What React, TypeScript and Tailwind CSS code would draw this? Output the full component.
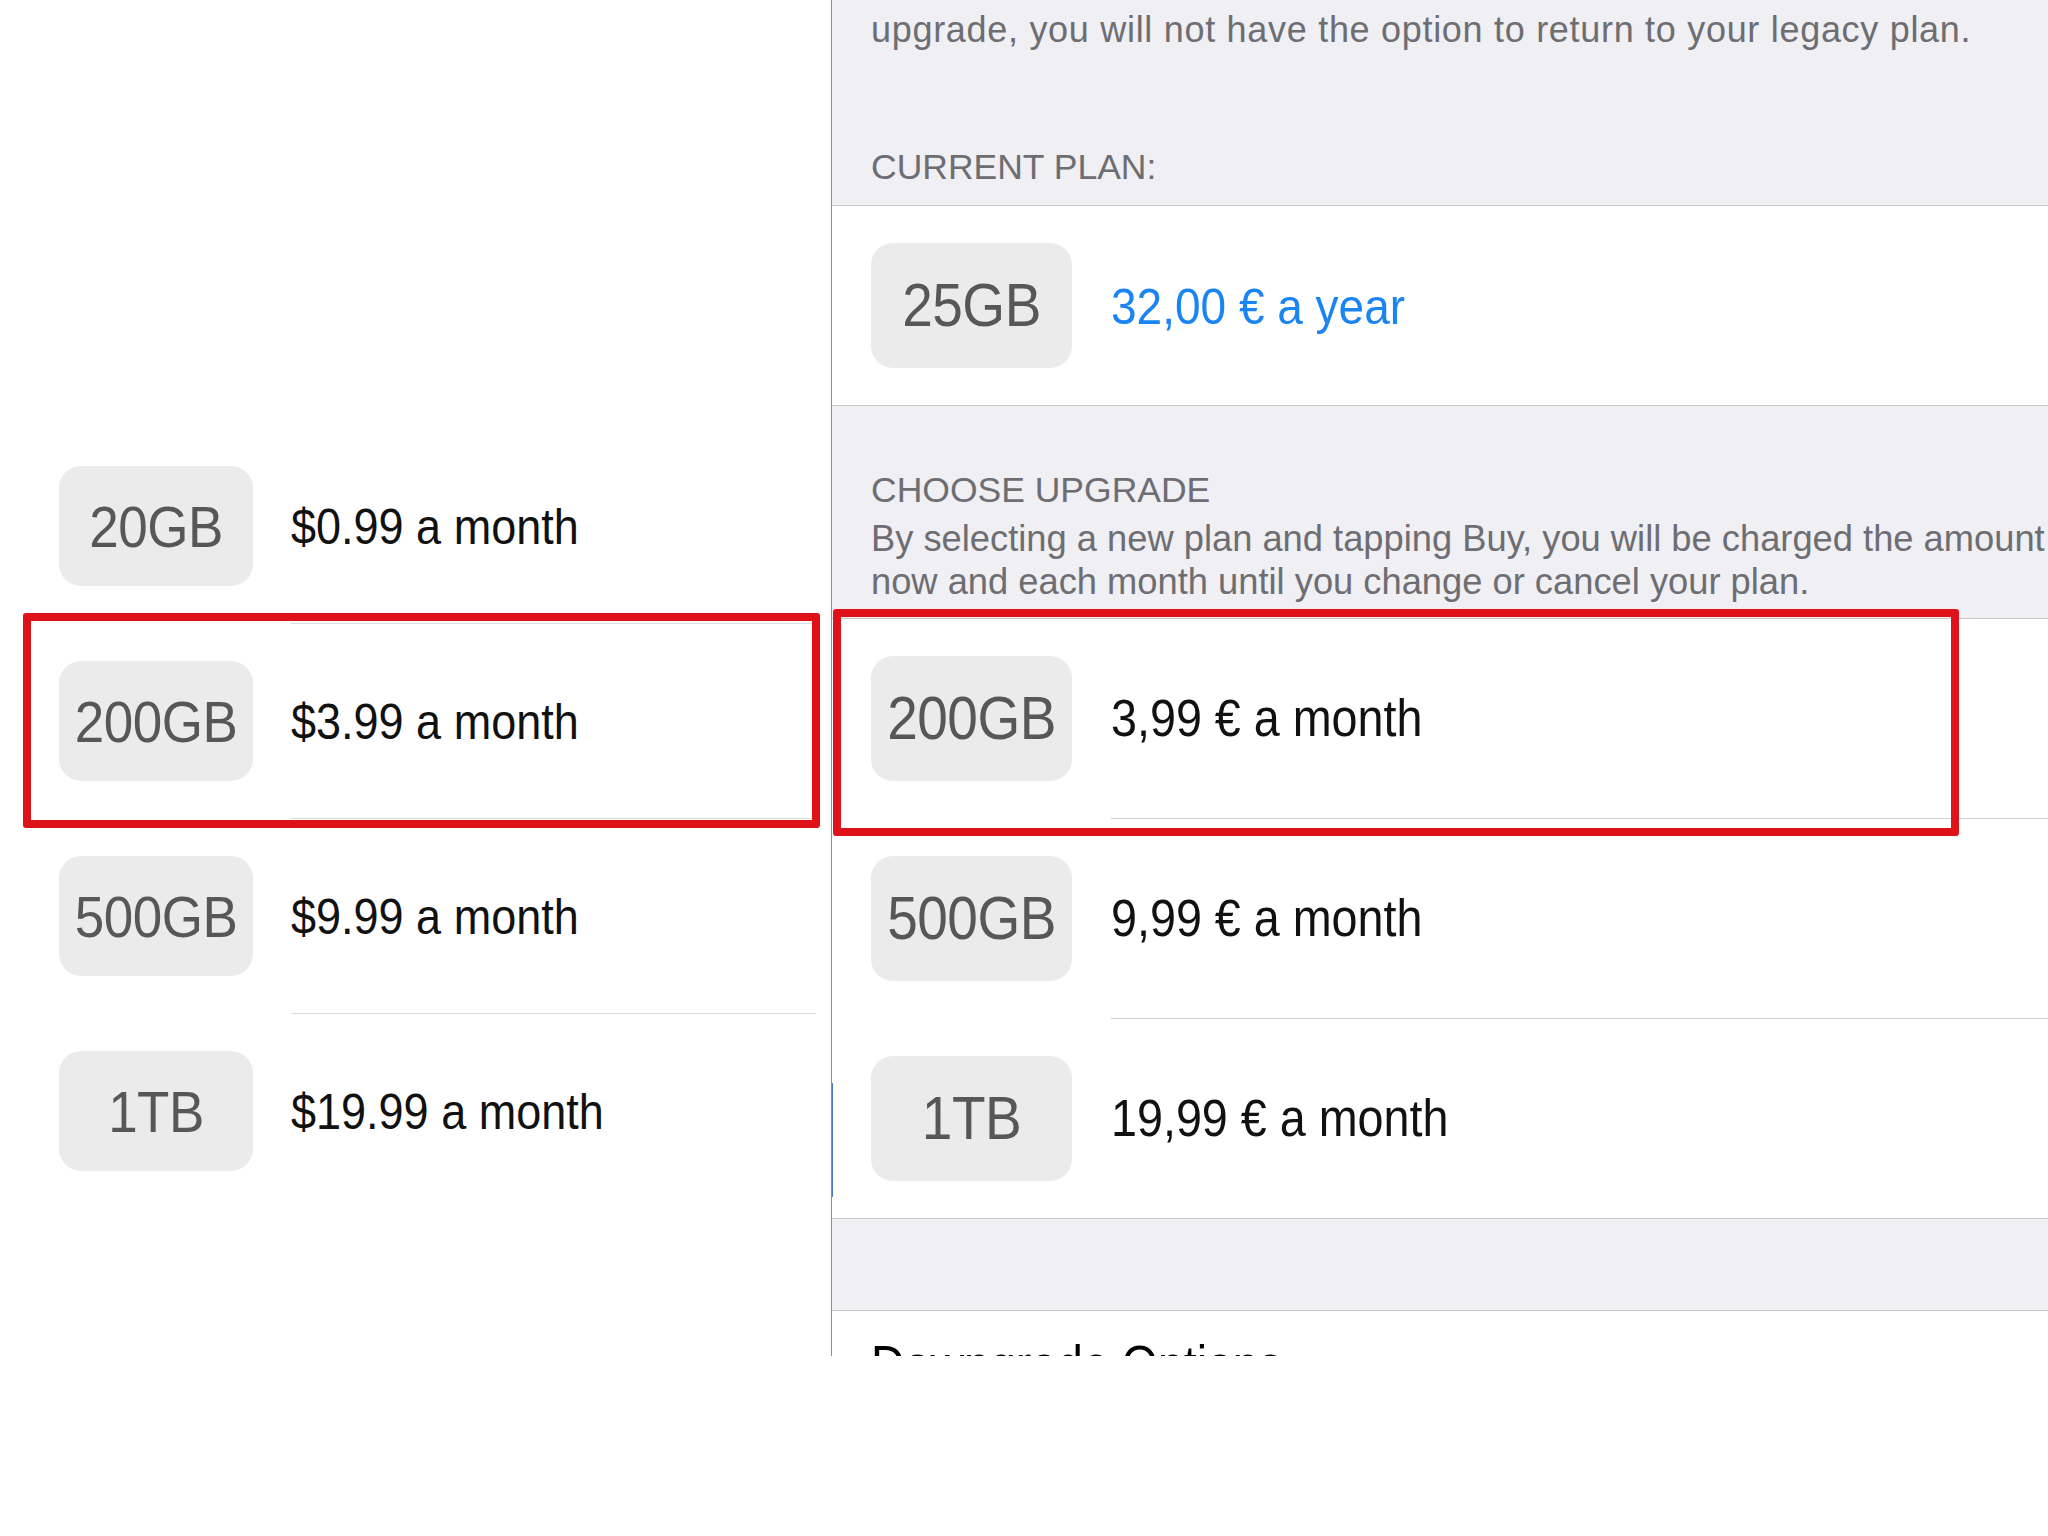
import React from "react";

const font = { fontFamily: '"Liberation Sans", Arial, Helvetica, sans-serif' };

type Plan = { size: string; price: string };

const usPlans: Plan[] = [
  { size: "20GB", price: "$0.99 a month" },
  { size: "200GB", price: "$3.99 a month" },
  { size: "500GB", price: "$9.99 a month" },
  { size: "1TB", price: "$19.99 a month" },
];

const euPlans: Plan[] = [
  { size: "200GB", price: "3,99 € a month" },
  { size: "500GB", price: "9,99 € a month" },
  { size: "1TB", price: "19,99 € a month" },
];

const Badge: React.FC<{ size: string; wide?: boolean }> = ({ size, wide }) => (
  <div
    className={`flex shrink-0 items-center justify-center rounded-[22px] bg-[#ebebeb] ${
      wide ? "h-[125px] w-[201px]" : "h-[120px] w-[194px]"
    }`}
  >
    <span
      className={`inline-block scale-y-110 text-[#575757] ${
        wide ? "text-[55px]" : "text-[53px]"
      } leading-none tracking-[-0.5px]`}
    >
      {size}
    </span>
  </div>
);

const UsPanel = () => (
  <div className="w-[831px] shrink-0 bg-white pt-[429px] pr-[15px]">
    {usPlans.map((plan, i) => (
      <div key={plan.size}>
        {i > 0 && <div className="ml-[291px] h-px bg-[#dcdcdc]" />}
        <div className="flex h-[194px] items-center pl-[59px]">
          <Badge size={plan.size} />
          <span className="ml-[38px] inline-block scale-y-110 text-[45px] leading-none text-[#111]">
            {plan.price}
          </span>
        </div>
      </div>
    ))}
  </div>
);

const EuPanel = () => (
  <div className="flex-1 overflow-hidden whitespace-nowrap bg-[#efeff4]">
    <div className="px-[39px] pt-[8px] text-[36px] leading-[43px] tracking-[0.7px] text-[#6d6d72]">
      <p>upgrade, you will not have the option to return to your legacy plan.</p>
      <p className="mt-[95px] pb-[16px] text-[35.5px] tracking-normal">CURRENT PLAN:</p>
    </div>

    <div className="flex h-[201px] items-center border-y border-[#c8c7cc] bg-white pl-[39px]">
      <Badge size="25GB" wide />
      <span className="ml-[39px] inline-block scale-y-110 text-[46px] leading-none text-[#1a85f2]">
        32,00 € a year
      </span>
    </div>

    <div className="px-[39px] pt-[63px] pb-[15px] text-[#6d6d72]">
      <p className="text-[35.5px] leading-[43px]">CHOOSE UPGRADE</p>
      <p className="mt-[5px] text-[36.3px] leading-[43px]">
        By selecting a new plan and tapping Buy, you will be charged the amount
        <br />
        now and each month until you change or cancel your plan.
      </p>
    </div>

    <div className="border-y border-[#c8c7cc] bg-white">
      {euPlans.map((plan, i) => (
        <div key={plan.size}>
          {i > 0 && <div className="ml-[279px] h-px bg-[#d0d0d4]" />}
          <div className="flex h-[199px] items-center pl-[39px]">
            <Badge size={plan.size} wide />
            <span className="ml-[39px] inline-block scale-y-110 text-[46.7px] leading-none text-[#111]">
              {plan.price}
            </span>
          </div>
        </div>
      ))}
    </div>

    <div className="h-[91px]" />

    <div className="h-[200px] border-t border-[#c8c7cc] bg-white pl-[39px] pt-[30px]">
      <span className="inline-block scale-y-110 text-[46.5px] leading-none text-black">
        Downgrade Options
      </span>
    </div>
  </div>
);

export default function App() {
  return (
    <div className="h-[1536px] w-[2048px] overflow-hidden bg-white" style={font}>
      <div className="relative flex h-[1356px] w-full">
        <UsPanel />
        <div className="relative w-px shrink-0 bg-[#8e8e8e]">
          <div className="absolute left-px top-[1083px] h-[114px] w-px bg-[#4a7bd0]" />
        </div>
        <EuPanel />

        {/* highlight boxes drawn over the screenshots */}
        <div className="absolute left-[23px] top-[613px] h-[215px] w-[797px] rounded-[3px] border-[8px] border-[#de1218]" />
        <div className="absolute left-[833px] top-[609px] h-[227px] w-[1126px] rounded-[3px] border-[8px] border-[#de1218]" />
      </div>
    </div>
  );
}
